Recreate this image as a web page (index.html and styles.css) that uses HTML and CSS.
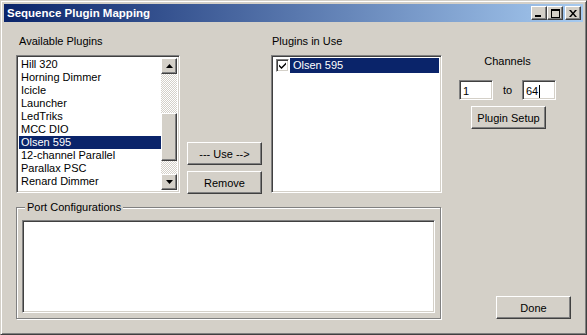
FILE: index.html
```html
<!DOCTYPE html>
<html lang="en">
<head>
    <meta charset="UTF-8">
    <title>Sequence Plugin Mapping</title>
    <link rel="stylesheet" href="styles.css">
</head>
<body>
    <div class="window">
        <div class="titlebar">
            <span class="title">Sequence Plugin Mapping</span>
            <div class="caption-btns">
                <span class="cap-btn"><svg width="8" height="7" viewBox="0 0 8 7"><rect x="0" y="5" width="6" height="2" fill="#000"/></svg></span>
                <span class="cap-btn"><svg width="9" height="9" viewBox="0 0 9 9"><rect x="0.5" y="0.5" width="8" height="8" fill="none" stroke="#000"/><rect x="0" y="0" width="9" height="2" fill="#000"/></svg></span>
                <span class="cap-btn close"><svg width="8" height="7" viewBox="0 0 8 7"><path d="M0 0h2l2 2.5 2-2.5h2l-3 3.5 3 3.5h-2l-2-2.5-2 2.5h-2l3-3.5z" fill="#000"/></svg></span>
            </div>
        </div>

        <div class="top">
            <div class="col-avail">
                <div class="label">Available Plugins</div>
                <div class="field listbox">
                    <ul class="items">
                        <li>Hill 320</li>
                        <li>Horning Dimmer</li>
                        <li>Icicle</li>
                        <li>Launcher</li>
                        <li>LedTriks</li>
                        <li>MCC DIO</li>
                        <li class="selected">Olsen 595</li>
                        <li>12-channel Parallel</li>
                        <li>Parallax PSC</li>
                        <li>Renard Dimmer</li>
                        <li>RGBLED</li>
                    </ul>
                    <div class="scrollbar">
                        <span class="btn sb-btn"><svg width="7" height="4" viewBox="0 0 7 4"><polygon points="3.5,0 7,4 0,4" fill="#000"/></svg></span>
                        <div class="track">
                            <div class="track-pad"></div>
                            <span class="btn thumb"></span>
                        </div>
                        <span class="btn sb-btn"><svg width="7" height="4" viewBox="0 0 7 4"><polygon points="0,0 7,0 3.5,4" fill="#000"/></svg></span>
                    </div>
                </div>
            </div>

            <div class="col-mid">
                <button class="btn">--- Use --&gt;</button>
                <button class="btn">Remove</button>
            </div>

            <div class="col-inuse">
                <div class="label label-tight">Plugins in Use</div>
                <div class="field listbox use-list">
                    <div class="use-item">
                        <span class="checkbox"><svg width="7" height="7" viewBox="0 0 7 7"><path d="M0 2.5l2.5 2.5 4.5-4.5v2l-4.5 4.5-2.5-2.5z" fill="#000"/></svg></span>
                        <span class="use-name">Olsen 595</span>
                    </div>
                </div>
            </div>

            <div class="col-chan">
                <div class="chan-label">Channels</div>
                <div class="chan-row">
                    <span class="field textbox">1</span>
                    <span class="to">to</span>
                    <span class="field textbox">64<span class="caret"></span></span>
                </div>
                <button class="btn setup-btn">Plugin Setup</button>
            </div>
        </div>

        <div class="bottom">
            <div class="group">
                <span class="group-title">Port Configurations</span>
                <div class="field port-area"></div>
            </div>
            <button class="btn done-btn">Done</button>
        </div>
    </div>
</body>
</html>
```

FILE: styles.css
```css
*{
    margin: 0;
    padding: 0;
    box-sizing: border-box;
}
body{
    background: #d4d0c8;
    font-family: "Liberation Sans", Arial, sans-serif;
    font-size: 11px;
    color: #000;
}
ul{
    list-style: none;
}
.window{
    width: 587px;
    height: 335px;
    background: #d4d0c8;
    border: 1px solid;
    border-color: #d4d0c8 #404040 #404040 #d4d0c8;
    box-shadow: inset 1px 1px #fff, inset -1px -1px #808080;
    padding: 3px;
}
.titlebar{
    height: 18px;
    display: flex;
    align-items: center;
    justify-content: space-between;
    background: linear-gradient(to right, #0a246a, #a6caf0);
    padding: 0 2px;
}
.title{
    color: #fff;
    font-weight: bold;
    font-size: 11.5px;
    padding-left: 1px;
}
.caption-btns{
    display: flex;
}
.cap-btn{
    width: 16px;
    height: 14px;
    display: flex;
    align-items: center;
    justify-content: center;
    background: #d4d0c8;
    border: 1px solid;
    border-color: #fff #404040 #404040 #fff;
    box-shadow: inset -1px -1px #808080;
}
.cap-btn.close{
    margin-left: 2px;
}

/* raised button */
.btn{
    display: flex;
    align-items: center;
    justify-content: center;
    background: #d4d0c8;
    border: 1px solid;
    border-color: #fff #404040 #404040 #fff;
    box-shadow: inset -1px -1px #808080, inset 1px 1px #d4d0c8;
    font-family: inherit;
    font-size: 11px;
    color: #000;
}
/* sunken field */
.field{
    background: #fff;
    border: 1px solid;
    border-color: #808080 #fff #fff #808080;
    box-shadow: inset 1px 1px #404040, inset -1px -1px #d4d0c8;
}

.top{
    display: flex;
    padding: 13px 0 0 12px;
}
.label{
    height: 13px;
    line-height: 13px;
    margin-bottom: 7px;
    padding-left: 3px;
}
.label-tight{
    padding-left: 1px;
}
.col-avail{
    width: 164px;
}
.listbox{
    height: 138px;
    padding: 2px;
    display: flex;
    overflow: hidden;
}
.items{
    flex: 1;
    overflow: hidden;
}
.items li{
    height: 13px;
    line-height: 13px;
    padding-left: 2px;
    white-space: nowrap;
}
.items .selected{
    background: #0a246a;
    color: #fff;
}
.scrollbar{
    width: 16px;
    display: flex;
    flex-direction: column;
}
.sb-btn{
    height: 16px;
    flex: none;
}
.track{
    flex: 1;
    background: repeating-conic-gradient(#fff 0 25%, #d4d0c8 0 50%) 0 0/2px 2px;
}
.track-pad{
    height: 39px;
}
.thumb{
    height: 48px;
}

.col-mid{
    width: 75px;
    margin-left: 7px;
    margin-bottom: -1px;
    display: flex;
    flex-direction: column;
    justify-content: flex-end;
    gap: 6px;
}
.col-mid .btn{
    height: 23px;
}

.col-inuse{
    width: 171px;
    margin-left: 9px;
}
.use-list{
    display: block;
}
.use-item{
    height: 15px;
    display: flex;
    align-items: center;
    padding-left: 2px;
}
.checkbox{
    width: 13px;
    height: 13px;
    display: flex;
    align-items: center;
    justify-content: center;
    background: #fff;
    border: 1px solid;
    border-color: #808080 #fff #fff #808080;
    box-shadow: inset 1px 1px #404040, inset -1px -1px #d4d0c8;
}
.use-name{
    flex: 1;
    height: 15px;
    line-height: 15px;
    margin-left: 1px;
    padding-left: 3px;
    background: #0a246a;
    color: #fff;
}

.col-chan{
    width: 97px;
    margin-left: 17px;
    padding-top: 20px;
    display: flex;
    flex-direction: column;
    align-items: center;
}
.chan-label{
    height: 13px;
    line-height: 13px;
}
.chan-row{
    display: flex;
    align-items: center;
    margin-top: 12px;
}
.textbox{
    width: 34px;
    height: 20px;
    padding: 2px 0 0 3px;
    display: flex;
    align-items: center;
}
.caret{
    display: inline-block;
    width: 1px;
    height: 13px;
    background: #000;
    margin-left: 1px;
}
.to{
    width: 29px;
    text-align: center;
}
.setup-btn{
    width: 75px;
    height: 23px;
    margin-top: 6px;
    margin-left: 2px;
}

.bottom{
    display: flex;
    padding-left: 12px;
    margin-top: 14px;
}
.group{
    position: relative;
    width: 425px;
    height: 112px;
    border: 1px solid #808080;
    box-shadow: inset 1px 1px #fff, 1px 1px #fff;
    padding: 12px 0 0 5px;
}
.group-title{
    position: absolute;
    top: -7px;
    left: 8px;
    background: #d4d0c8;
    padding: 0 2px;
    line-height: 13px;
}
.port-area{
    width: 413px;
    height: 93px;
}
.done-btn{
    width: 75px;
    height: 23px;
    margin-left: 55px;
    align-self: flex-end;
}
```
